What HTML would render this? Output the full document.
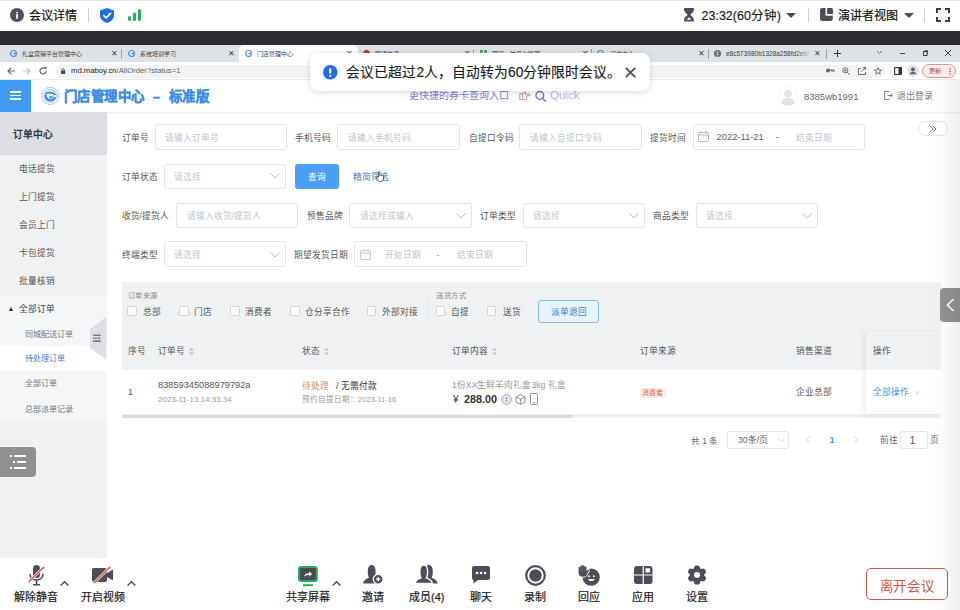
<!DOCTYPE html>
<html lang="zh-CN"><head><meta charset="utf-8">
<style>
*{margin:0;padding:0;box-sizing:border-box}
html,body{width:960px;height:610px;overflow:hidden;background:#fff;font-family:"Liberation Sans",sans-serif;color:#333}
.a{position:absolute}
.t{position:absolute;white-space:nowrap;line-height:1}
svg{position:absolute;overflow:visible}
#topbar{left:0;top:0;width:960px;height:31px;background:#fff;border-top:1px solid #e6e6e6}
#dark{left:0;top:31px;width:960px;height:14px;background:#2c2d31}
#tabs{left:0;top:45px;width:960px;height:17px;background:#dee1e6}
#addr{left:0;top:62px;width:960px;height:18px;background:#fff}
#hdr{left:0;top:80px;width:960px;height:32px;background:#fff}
#side{left:0;top:112px;width:107px;height:446px;background:#f0f1f3}
#main{left:107px;top:112px;width:853px;height:446px;background:#fff}
#bot{left:0;top:558px;width:960px;height:52px;background:#fff}
.tab{position:absolute;top:45px;height:17px}
.tabt{font-size:6px;color:#3c4043;top:51px}
.x{font-size:8px;color:#444;top:50px}
.inp{position:absolute;border:1px solid #e1e3e8;border-radius:3px;background:#fff}
.lbl{font-size:8.7px;color:#555}
.ph{font-size:8.7px;color:#c0c4cc}
.cb{position:absolute;width:9.6px;height:9.6px;border:1px solid #d3d6dc;background:#fff;border-radius:1px;top:306.4px;margin-left:-0.4px}
.cbt{font-size:8.7px;color:#555;top:308px}
.th{font-size:8.7px;color:#555;top:347px}
.lab{font-size:11px;color:#1a1a1a;top:592px;-webkit-text-stroke:0.2px #1a1a1a}
</style></head><body>
<div class="a" id="topbar"></div>
<div class="a" id="dark"></div>
<div class="a" id="tabs"></div>
<div class="a" id="addr"></div>
<div class="a" id="hdr"></div>
<div class="a" id="side"></div>
<div class="a" id="main"></div>
<div class="a" id="bot"></div>

<!-- ===== meeting top bar ===== -->
<svg style="left:10px;top:7.8px" width="14" height="14" viewBox="0 0 14 14"><circle cx="7" cy="7" r="7" fill="#4c515e"/><rect x="6.2" y="5.9" width="1.7" height="5" fill="#fff"/><rect x="6.2" y="3.9" width="1.7" height="1.3" fill="#fff"/></svg>
<div class="t" style="left:29px;top:10px;font-size:12px;color:#111;-webkit-text-stroke:0.2px #111">会议详情</div>
<div class="a" style="left:88px;top:8px;width:1px;height:14px;background:#d0d0d0"></div>
<svg style="left:100px;top:8px" width="14" height="15" viewBox="0 0 14 15"><path d="M7 0 L14 2.5 V7.5 C14 11 11 13.5 7 15 C3 13.5 0 11 0 7.5 V2.5 Z" fill="#1a6fe8"/><path d="M3.8 7.6 L6.2 9.8 L10.4 5.4" stroke="#fff" stroke-width="1.8" fill="none" stroke-linecap="round" stroke-linejoin="round"/></svg>
<svg style="left:128px;top:9px" width="14" height="12" viewBox="0 0 14 12"><rect x="0" y="7" width="3" height="5" rx="1.5" fill="#1fb45a"/><rect x="5" y="3.5" width="3" height="8.5" rx="1.5" fill="#1fb45a"/><rect x="10" y="0" width="3" height="12" rx="1.5" fill="#1fb45a"/></svg>

<svg style="left:684px;top:8.1px" width="10" height="13.5" viewBox="0 0 10 13.5"><path d="M1 0 H9 C9.6 0 10 .4 10 1 C10 4 7.2 5.4 6.4 6.75 C7.2 8.1 10 9.5 10 12.5 C10 13.1 9.6 13.5 9 13.5 H1 C.4 13.5 0 13.1 0 12.5 C0 9.5 2.8 8.1 3.6 6.75 C2.8 5.4 0 4 0 1 C0 .4 .4 0 1 0 Z" fill="#4b4e57"/><path d="M5 9.3 L7.4 11.8 H2.6 Z" fill="#fff"/></svg>
<div class="t" style="left:701.5px;top:9.8px;font-size:12.5px;color:#1a1a1a;-webkit-text-stroke:0.15px #1a1a1a">23:32(60分钟)</div>
<svg style="left:786px;top:13px" width="10" height="5" viewBox="0 0 10 5"><path d="M0 0 H10 L5 5 Z" fill="#4b4e57"/></svg>
<div class="a" style="left:808px;top:8px;width:1px;height:14px;background:#d0d0d0"></div>
<svg style="left:819.6px;top:8.3px" width="13" height="13.4" viewBox="0 0 13 13.4"><rect x="0" y="0" width="12.8" height="13.1" rx="2.4" fill="#4b4e57"/><path d="M6.4 0 V6.9 H12.8" stroke="#fff" stroke-width="1.8" fill="none"/><rect x="7.3" y="0" width="5.5" height="6" rx="1.5" fill="#4b4e57"/></svg>
<div class="t" style="left:838px;top:9.5px;font-size:12px;color:#111;-webkit-text-stroke:0.2px #111">演讲者视图</div>
<svg style="left:904px;top:13px" width="10" height="5" viewBox="0 0 10 5"><path d="M0 0 H10 L5 5 Z" fill="#4b4e57"/></svg>
<div class="a" style="left:924px;top:8px;width:1px;height:14px;background:#d0d0d0"></div>
<svg style="left:936px;top:8px" width="14" height="14" viewBox="0 0 14 14"><path d="M1 5 V1 H5 M9 1 H13 V5 M13 9 V13 H9 M5 13 H1 V9" stroke="#3b3e45" stroke-width="2" fill="none"/></svg>

<!-- ===== chrome tabs ===== -->
<svg style="left:10px;top:50px" width="7" height="7" viewBox="0 0 10 10"><circle cx="5" cy="5" r="4.2" fill="none" stroke="#3d8ae6" stroke-width="1.6"/><path d="M5 5 H8.5" stroke="#3d8ae6" stroke-width="1.6"/></svg>
<div class="t tabt" style="left:22px">礼盒营销平台管理中心</div>
<div class="t x" style="left:111px">✕</div>
<div class="a" style="left:121px;top:49px;width:1px;height:10px;background:#9aa0a6"></div>
<svg style="left:128px;top:50px" width="7" height="7" viewBox="0 0 10 10"><circle cx="5" cy="5" r="4.2" fill="none" stroke="#3d8ae6" stroke-width="1.6"/><path d="M5 5 H8.5" stroke="#3d8ae6" stroke-width="1.6"/></svg>
<div class="t tabt" style="left:140px">系统培训学习</div>
<div class="t x" style="left:228px">✕</div>
<div class="a" style="left:239px;top:45px;width:119px;height:17px;background:#fff;border-radius:5px 5px 0 0"></div>
<svg style="left:245px;top:50px" width="7" height="7" viewBox="0 0 10 10"><circle cx="5" cy="5" r="4.2" fill="none" stroke="#3d8ae6" stroke-width="1.6"/><path d="M5 5 H8.5" stroke="#3d8ae6" stroke-width="1.6"/></svg>
<div class="t tabt" style="left:257px">门店管理中心</div>
<div class="t x" style="left:346px">✕</div>
<svg style="left:363px;top:50px" width="7" height="7" viewBox="0 0 10 10"><circle cx="5" cy="5" r="5" fill="#d93025"/></svg>
<div class="t tabt" style="left:375px">圆通快递</div>
<div class="t x" style="left:464px">✕</div>
<div class="a" style="left:473px;top:49px;width:1px;height:10px;background:#9aa0a6"></div>
<svg style="left:480px;top:50px" width="7" height="7" viewBox="0 0 10 10"><rect x="0" y="0" width="4" height="4" fill="#34a853"/><rect x="6" y="0" width="4" height="4" fill="#34a853"/><rect x="0" y="6" width="4" height="4" fill="#34a853"/><rect x="6" y="6" width="4" height="4" fill="#34a853"/></svg>
<div class="t tabt" style="left:491.5px">营销一体平台管理</div>
<div class="t x" style="left:582px">✕</div>
<div class="a" style="left:591px;top:49px;width:1px;height:10px;background:#9aa0a6"></div>
<svg style="left:597px;top:50px" width="7" height="7" viewBox="0 0 10 10"><circle cx="5" cy="5" r="4.2" fill="none" stroke="#3d8ae6" stroke-width="1.6"/></svg>
<div class="t tabt" style="left:610px">订单中心</div>
<div class="t x" style="left:698px">✕</div>
<div class="a" style="left:708px;top:49px;width:1px;height:10px;background:#9aa0a6"></div>
<svg style="left:714px;top:50px" width="7" height="7" viewBox="0 0 10 10"><circle cx="5" cy="5" r="5" fill="#5f6368"/><path d="M2 3 Q5 5 8 3 M2 7 Q5 5 8 7 M5 0 V10" stroke="#dee1e6" stroke-width="0.8" fill="none"/></svg>
<div class="t tabt" style="left:726px;font-size:6.5px;top:50.5px">e8c573980b1328a258fd2e6f</div>
<div class="a" style="left:796px;top:45px;width:16px;height:17px;background:linear-gradient(90deg,rgba(222,225,230,0),#dee1e6)"></div>
<div class="t x" style="left:814px">✕</div>
<div class="a" style="left:826px;top:49px;width:1px;height:10px;background:#9aa0a6"></div>
<svg style="left:833.5px;top:50px" width="7" height="7" viewBox="0 0 7 7"><path d="M3.5 0 V7 M0 3.5 H7" stroke="#333" stroke-width="1"/></svg>
<svg style="left:877px;top:51px" width="5" height="3" viewBox="0 0 10 6"><path d="M0 0 L5 5 L10 0" stroke="#444" stroke-width="1.5" fill="none"/></svg>
<div class="a" style="left:900px;top:53px;width:5px;height:1px;background:#444"></div>
<svg style="left:923px;top:50px" width="5" height="6" viewBox="0 0 5 6"><rect x="0.5" y="1.5" width="3.5" height="4" stroke="#444" fill="none" stroke-width="1"/><path d="M1.5 0.5 H4.5 V4" stroke="#444" fill="none" stroke-width="0.8"/></svg>
<svg style="left:945px;top:50px" width="6" height="6" viewBox="0 0 6 6"><path d="M0 0 L6 6 M6 0 L0 6" stroke="#444" stroke-width="1"/></svg>

<!-- ===== address bar ===== -->
<svg style="left:7px;top:67px" width="8" height="8" viewBox="0 0 8 8"><path d="M8 4 H1 M4 1 L1 4 L4 7" stroke="#5f6368" stroke-width="1.2" fill="none"/></svg>
<svg style="left:23px;top:67px" width="8" height="8" viewBox="0 0 8 8"><path d="M0 4 H7 M4 1 L7 4 L4 7" stroke="#bdc1c6" stroke-width="1.2" fill="none"/></svg>
<svg style="left:39px;top:67px" width="8" height="8" viewBox="0 0 8 8"><path d="M7 4 A3 3 0 1 1 5.8 1.6" stroke="#5f6368" stroke-width="1.2" fill="none"/><path d="M4.5 0 H7.5 V3 Z" fill="#5f6368"/></svg>
<div class="a" style="left:55px;top:64.5px;width:830px;height:13.5px;background:#f1f3f4;border-radius:7px"></div>
<svg style="left:61px;top:68px" width="4.2" height="6" viewBox="0 0 5 7"><rect x="0" y="3" width="5" height="4" rx="0.6" fill="#4a4d52"/><path d="M1.1 3.2 V2.1 A1.4 1.4 0 0 1 3.9 2.1 V3.2" stroke="#4a4d52" stroke-width="1" fill="none"/></svg>
<div class="t" style="left:71px;top:66.8px;font-size:7.7px;color:#202124">md.maboy.cn<span style="color:#5f6368">/AllOrder?status=1</span></div>
<svg style="left:826px;top:68px" width="8" height="5" viewBox="0 0 8 5"><circle cx="2" cy="2.5" r="2" fill="#5f6368"/><path d="M3 2 H8 V4 M6 2 V4" stroke="#5f6368" stroke-width="1" fill="none"/></svg>
<svg style="left:842px;top:67px" width="8" height="8" viewBox="0 0 8 8"><circle cx="3.3" cy="3.3" r="2.6" stroke="#5f6368" stroke-width="0.9" fill="none"/><path d="M5.2 5.2 L7.8 7.8 M2 3.3 H4.6 M3.3 2 V4.6" stroke="#5f6368" stroke-width="0.9"/></svg>
<svg style="left:858px;top:67px" width="8" height="8" viewBox="0 0 8 8"><path d="M3 1.5 H0.5 V7.5 H7.5 V5 M3.5 4.5 L7.5 0.5 M5 0.5 H7.5 V3" stroke="#5f6368" stroke-width="0.9" fill="none"/></svg>
<svg style="left:874px;top:67px" width="8" height="8" viewBox="0 0 10 10"><path d="M5 0.8 L6.2 3.7 L9.3 3.9 L6.9 5.9 L7.7 9 L5 7.3 L2.3 9 L3.1 5.9 L0.7 3.9 L3.8 3.7 Z" stroke="#5f6368" stroke-width="1.1" fill="none" stroke-linejoin="round"/></svg>
<svg style="left:894px;top:67px" width="8" height="8" viewBox="0 0 8 8"><rect x="0.6" y="0.6" width="6.8" height="6.8" stroke="#333" stroke-width="1.1" fill="none"/><rect x="4.5" y="0.6" width="3" height="6.8" fill="#333"/></svg>
<svg style="left:907px;top:65px" width="12" height="12" viewBox="0 0 12 12"><circle cx="6" cy="6" r="6" fill="#dfe3ea"/><circle cx="6" cy="4.6" r="2" fill="#5f6368"/><path d="M2.6 9.3 C3 7.5 4.5 7 6 7 C7.5 7 9 7.5 9.4 9.3 Z" fill="#5f6368"/></svg>
<div class="a" style="left:922px;top:64px;width:34px;height:14px;border:0.8px solid #d59592;border-radius:7px;background:#fbeceb"></div>
<div class="t" style="left:929px;top:67.8px;font-size:6.2px;color:#b3403c">更新</div>
<svg style="left:948.5px;top:67.5px" width="2" height="7" viewBox="0 0 2 7"><circle cx="1" cy="1" r="0.75" fill="#8b3a3a"/><circle cx="1" cy="3.5" r="0.75" fill="#8b3a3a"/><circle cx="1" cy="6" r="0.75" fill="#8b3a3a"/></svg>
<div class="a" style="left:0;top:79px;width:960px;height:1px;background:#e8eaed"></div>

<!-- ===== app header ===== -->
<div class="a" style="left:0;top:80px;width:31px;height:32px;background:#3f9af3"></div>
<div class="a" style="left:10px;top:91.2px;width:11px;height:1.6px;background:#fff"></div>
<div class="a" style="left:10px;top:94.7px;width:11px;height:1.6px;background:#fff"></div>
<div class="a" style="left:10px;top:98.2px;width:11px;height:1.6px;background:#fff"></div>
<svg style="left:41px;top:87px" width="19" height="18" viewBox="0 0 19 18"><circle cx="9.2" cy="8.9" r="8.5" fill="none" stroke="#4a93e0" stroke-width="1" stroke-dasharray="0.9 0.7"/><circle cx="9.2" cy="8.9" r="6.4" fill="none" stroke="#4a93e0" stroke-width="0.6"/><path d="M4.8 7.2 C6.5 4.9 11 4.8 14.4 8" stroke="#3d8ae0" stroke-width="2" fill="none"/><path d="M4.7 7.6 C4.3 11 6.5 13.4 9.3 13.4 C11.6 13.4 13.3 12 13.9 10.2" stroke="#3d8ae0" stroke-width="2.3" fill="none"/><path d="M7.6 9.2 H12.6 L9.6 12.2 Z" fill="#3d8ae0"/></svg>
<div class="t" style="left:64px;top:89.5px;font-size:13.4px;letter-spacing:0.4px;font-weight:bold;color:#3a8ee0;-webkit-text-stroke:0.3px #3a8ee0">门店管理中心 &nbsp;–&nbsp; 标准版</div>

<div class="t" style="left:409px;top:90.5px;font-size:10px;color:#8479d6">更快捷的券卡查询入口</div>
<svg style="left:518.5px;top:90.5px" width="12" height="10" viewBox="0 0 12 10"><path d="M0.8 2.6 H3.6 V8.6 H0.8 Z M3.6 3.2 L5.6 1 H6.6 L6.1 3 H10.6 C11.5 3 11.5 4.6 10.6 4.6 H7.8 V7.8 C7.8 8.3 7.4 8.6 7 8.6 H3.6" stroke="#d58a86" stroke-width="1" fill="none" stroke-linejoin="round"/></svg>
<svg style="left:535px;top:90.5px" width="12" height="11" viewBox="0 0 12 11"><circle cx="4.8" cy="4.4" r="3.9" stroke="#7366cf" stroke-width="1.3" fill="none"/><path d="M7.4 7.3 L10.6 10.2" stroke="#7366cf" stroke-width="1.4" stroke-linecap="round"/></svg>
<div class="t" style="left:550px;top:90px;font-size:11.5px;color:#bdb5ea">Quick</div>

<svg style="left:778px;top:86px" width="20" height="20" viewBox="0 0 20 20"><circle cx="10" cy="10" r="9.6" fill="#fff" stroke="#eee" stroke-width="0.6"/><circle cx="10" cy="7.8" r="3.8" fill="#e3e3e3"/><path d="M3 17 C4 12.5 7 12 10 12 C13 12 16 12.5 17 17 C15 19 12.5 19.6 10 19.6 C7.5 19.6 5 19 3 17 Z" fill="#e3e3e3"/></svg>
<div class="t" style="left:804px;top:91.5px;font-size:9.5px;color:#666">8385wb1991</div>
<svg style="left:884px;top:91px" width="9" height="9" viewBox="0 0 9 9"><path d="M5.5 0.5 H0.5 V8.5 H5.5 M3.5 4.5 H8.5 M6.5 2.5 L8.5 4.5 L6.5 6.5" stroke="#777" stroke-width="0.9" fill="none"/></svg>
<div class="t" style="left:896.5px;top:91.5px;font-size:8.9px;color:#777">退出登录</div>

<!-- ===== sidebar ===== -->
<div class="a" style="left:0;top:112px;width:107px;height:43.4px;background:#dcdee4"></div>
<div class="t" style="left:12.5px;top:129.5px;font-size:9.8px;font-weight:bold;color:#333">订单中心</div>
<div class="t" style="left:18.7px;top:165px;font-size:8.7px;color:#555">电话提货</div>
<div class="t" style="left:18.7px;top:193px;font-size:8.7px;color:#555">上门提货</div>
<div class="t" style="left:18.7px;top:221px;font-size:8.7px;color:#555">会员上门</div>
<div class="t" style="left:18.7px;top:249px;font-size:8.7px;color:#555">卡包提货</div>
<div class="t" style="left:18.7px;top:277px;font-size:8.7px;color:#555">批量核销</div>
<div class="a" style="left:0;top:296px;width:107px;height:125px;background:#f5f6f8"></div>
<svg style="left:8.5px;top:307px" width="4" height="4" viewBox="0 0 4 4"><path d="M0 4 L2 0 L4 4 Z" fill="#333"/></svg>
<div class="t" style="left:18.7px;top:305px;font-size:8.7px;color:#444">全部订单</div>
<div class="t" style="left:25px;top:330.5px;font-size:8.1px;color:#777">同城配送订单</div>
<div class="a" style="left:0;top:346px;width:107px;height:25px;background:#fff"></div>
<div class="t" style="left:25px;top:355.3px;font-size:8.1px;color:#3d7fc6">待处理订单</div>
<div class="t" style="left:25px;top:380.3px;font-size:8.1px;color:#777">全部订单</div>
<div class="t" style="left:25px;top:405.8px;font-size:8.1px;color:#777">总部派单记录</div>
<svg style="left:89px;top:317px" width="18" height="43" viewBox="0 0 18 43"><path d="M17.4 0 V43 L1 31 V12 Z" fill="#dcdee3"/><path d="M4 18.3 H11.8 M4 24.1 H11.8" stroke="#555" stroke-width="1.1"/><path d="M4 21.2 H8.6" stroke="#666" stroke-width="1"/><path d="M9.6 19.8 L11.6 21.2 L9.6 22.6 Z" fill="#555"/></svg>
<div class="a" style="left:0;top:447px;width:36px;height:30px;background:#8f9092;border-radius:0 4px 4px 0"></div>
<svg style="left:10px;top:455px" width="17" height="15" viewBox="0 0 17 15"><rect x="0" y="0" width="2" height="2" fill="#fff"/><rect x="4" y="0" width="12.2" height="2" rx="0.8" fill="#fff"/><rect x="3" y="6" width="2" height="2" fill="#fff"/><rect x="7" y="6" width="9.2" height="2" rx="0.8" fill="#fff"/><rect x="0" y="12" width="2" height="2" fill="#fff"/><rect x="4" y="12" width="12.2" height="2" rx="0.8" fill="#fff"/></svg>

<!-- ===== filter form ===== -->
<div class="a" style="left:107px;top:112px;width:853px;height:2px;background:linear-gradient(#ececec,#fff)"></div>
<div class="t lbl" style="left:121.5px;top:133.5px">订单号</div>
<div class="inp" style="left:155px;top:124px;width:132px;height:26px"></div>
<div class="t ph" style="left:165px;top:133.5px">请输入订单号</div>
<div class="t lbl" style="left:295px;top:133.5px">手机号码</div>
<div class="inp" style="left:337px;top:124px;width:123px;height:26px"></div>
<div class="t ph" style="left:347.5px;top:133.5px">请输入手机号码</div>
<div class="t lbl" style="left:468.5px;top:133.5px">自提口令码</div>
<div class="inp" style="left:519px;top:124px;width:123px;height:26px"></div>
<div class="t ph" style="left:529.5px;top:133.5px">请输入自提口令码</div>
<div class="t lbl" style="left:650px;top:133.5px">提货时间</div>
<div class="inp" style="left:693px;top:124px;width:172px;height:26px"></div>
<svg style="left:698px;top:131px" width="11" height="11" viewBox="0 0 11 11"><rect x="0.5" y="1.5" width="10" height="9" rx="1" stroke="#aaa" stroke-width="0.8" fill="none"/><path d="M0.5 4 H10.5 M3 0 V2.5 M8 0 V2.5" stroke="#aaa" stroke-width="0.8"/><path d="M2.5 6 H3.5 M5 6 H6 M7.5 6 H8.5 M2.5 8 H3.5 M5 8 H6 M7.5 8 H8.5" stroke="#bbb" stroke-width="0.7"/></svg>
<div class="t" style="left:716.5px;top:132px;font-size:9.4px;color:#606266">2022-11-21</div>
<div class="t" style="left:775.5px;top:132px;font-size:9.4px;color:#606266">-</div>
<div class="t ph" style="left:796px;top:133.5px">结束日期</div>
<div class="a" style="left:918px;top:121px;width:29.5px;height:15px;border:1px solid #e2e4e8;border-radius:7px;background:#fff"></div>
<svg style="left:929px;top:124.5px" width="8" height="8" viewBox="0 0 8 8"><path d="M0.6 0.5 L4 4 L0.6 7.5 M3.6 0.5 L7 4 L3.6 7.5" stroke="#666" stroke-width="0.9" fill="none"/></svg>

<div class="t lbl" style="left:121.5px;top:172.5px">订单状态</div>
<div class="inp" style="left:164px;top:164px;width:121.5px;height:25px"></div>
<div class="t ph" style="left:174px;top:172.5px">请选择</div>
<svg style="left:269.5px;top:173px" width="10" height="5.5" viewBox="0 0 10 5.5"><path d="M0.4 0.4 L5 5 L9.6 0.4" stroke="#b4b8c0" stroke-width="0.9" fill="none"/></svg>
<div class="a" style="left:294.5px;top:164px;width:44px;height:24.5px;background:#4a9ff5;border-radius:3px"></div>
<div class="t" style="left:307.5px;top:172.5px;font-size:8.7px;color:#fff">查询</div>
<div class="t" style="left:353px;top:172.5px;font-size:8.7px;color:#3d7fc8">精简筛选</div>
<svg style="left:375.6px;top:171.2px" width="9" height="11" viewBox="0 0 9 11"><path d="M2.5 6 V1.2 C2.5 0.4 3.8 0.4 3.8 1.2 V4.5 C3.8 3.8 5 3.8 5 4.5 C5 3.9 6.2 3.9 6.2 4.6 C6.2 4.1 7.4 4.1 7.4 4.8 V8 C7.4 9.5 6.5 10.5 5 10.5 H4 C3 10.5 2.3 9.8 1.5 8.8 L0.4 7 C0 6.3 0.9 5.6 1.6 6.3 Z" fill="#fff" stroke="#222" stroke-width="0.7"/></svg>

<div class="t lbl" style="left:121.5px;top:212px">收货/提货人</div>
<div class="inp" style="left:176px;top:203px;width:121.5px;height:25px"></div>
<div class="t ph" style="left:186.5px;top:212px">请输入收货/提货人</div>
<div class="t lbl" style="left:307px;top:212px">预售品牌</div>
<div class="inp" style="left:349px;top:203px;width:122.5px;height:25px"></div>
<div class="t ph" style="left:359.5px;top:212px">请选择或输入</div>
<svg style="left:455.5px;top:213px" width="10" height="5.5" viewBox="0 0 10 5.5"><path d="M0.4 0.4 L5 5 L9.6 0.4" stroke="#b4b8c0" stroke-width="0.9" fill="none"/></svg>
<div class="t lbl" style="left:480px;top:212px">订单类型</div>
<div class="inp" style="left:522.5px;top:203px;width:122px;height:25px"></div>
<div class="t ph" style="left:532.5px;top:212px">请选择</div>
<svg style="left:628.5px;top:213px" width="10" height="5.5" viewBox="0 0 10 5.5"><path d="M0.4 0.4 L5 5 L9.6 0.4" stroke="#b4b8c0" stroke-width="0.9" fill="none"/></svg>
<div class="t lbl" style="left:653px;top:212px">商品类型</div>
<div class="inp" style="left:696px;top:203px;width:122px;height:25px"></div>
<div class="t ph" style="left:706px;top:212px">请选择</div>
<svg style="left:802px;top:213px" width="10" height="5.5" viewBox="0 0 10 5.5"><path d="M0.4 0.4 L5 5 L9.6 0.4" stroke="#b4b8c0" stroke-width="0.9" fill="none"/></svg>

<div class="t lbl" style="left:121.5px;top:251px">终端类型</div>
<div class="inp" style="left:164px;top:241px;width:121.5px;height:26px"></div>
<div class="t ph" style="left:174px;top:251px">请选择</div>
<svg style="left:269.5px;top:252px" width="10" height="5.5" viewBox="0 0 10 5.5"><path d="M0.4 0.4 L5 5 L9.6 0.4" stroke="#b4b8c0" stroke-width="0.9" fill="none"/></svg>
<div class="t lbl" style="left:294px;top:251px">期望发货日期</div>
<div class="inp" style="left:354px;top:241px;width:172.5px;height:26px"></div>
<svg style="left:360px;top:249px" width="11" height="11" viewBox="0 0 11 11"><rect x="0.5" y="1.5" width="10" height="9" rx="1" stroke="#bbb" stroke-width="0.8" fill="none"/><path d="M0.5 4 H10.5 M3 0 V2.5 M8 0 V2.5" stroke="#bbb" stroke-width="0.8"/><path d="M2.5 6 H3.5 M5 6 H6 M7.5 6 H8.5 M2.5 8 H3.5 M5 8 H6 M7.5 8 H8.5" stroke="#ccc" stroke-width="0.7"/></svg>
<div class="t ph" style="left:384.5px;top:251px">开始日期</div>
<div class="t" style="left:436.5px;top:250px;font-size:9.4px;color:#999">-</div>
<div class="t ph" style="left:457px;top:251px">结束日期</div>

<!-- ===== table ===== -->
<div class="a" style="left:121.5px;top:281.5px;width:819.5px;height:88px;background:#f0f1f3"></div>
<div class="t" style="left:127.7px;top:292.3px;font-size:7.3px;letter-spacing:0.6px;color:#8a8a8a">订单来源</div>
<div class="cb" style="left:127.7px"></div><div class="t cbt" style="left:142.6px">总部</div>
<div class="cb" style="left:179.4px"></div><div class="t cbt" style="left:193.6px">门店</div>
<div class="cb" style="left:230.4px"></div><div class="t cbt" style="left:244.6px">消费者</div>
<div class="cb" style="left:290.6px"></div><div class="t cbt" style="left:304.8px">仓分享合作</div>
<div class="cb" style="left:367px"></div><div class="t cbt" style="left:382px">外部对接</div>
<div class="a" style="left:427.5px;top:300px;width:1px;height:22px;background:#e2e4e8"></div>
<div class="t" style="left:436px;top:292.3px;font-size:7.3px;letter-spacing:0.6px;color:#8a8a8a">送货方式</div>
<div class="cb" style="left:436px"></div><div class="t cbt" style="left:451px">自提</div>
<div class="cb" style="left:487px"></div><div class="t cbt" style="left:502.7px">送货</div>
<div class="a" style="left:538px;top:300.2px;width:61px;height:22.5px;border:1px solid #86bbe9;border-radius:3px;background:#e9f3fc"></div>
<div class="t" style="left:551px;top:308px;font-size:8.7px;color:#3a7fc9">派单退回</div>

<div class="t th" style="left:128.2px">序号</div>
<div class="t th" style="left:158px">订单号</div>
<svg style="left:189px;top:347px" width="5" height="9" viewBox="0 0 5 9"><path d="M0 3.5 L2.5 0.5 L5 3.5 Z M0 5.5 L2.5 8.5 L5 5.5 Z" fill="#c0c4cc"/></svg>
<div class="t th" style="left:302px">状态</div>
<svg style="left:324px;top:347px" width="5" height="9" viewBox="0 0 5 9"><path d="M0 3.5 L2.5 0.5 L5 3.5 Z M0 5.5 L2.5 8.5 L5 5.5 Z" fill="#c0c4cc"/></svg>
<div class="t th" style="left:452px">订单内容</div>
<svg style="left:492px;top:347px" width="5" height="9" viewBox="0 0 5 9"><path d="M0 3.5 L2.5 0.5 L5 3.5 Z M0 5.5 L2.5 8.5 L5 5.5 Z" fill="#c0c4cc"/></svg>
<div class="t th" style="left:639.7px">订单来源</div>
<div class="t th" style="left:796px">销售渠道</div>

<div class="a" style="left:121.5px;top:369.5px;width:819.5px;height:45px;background:#fff;border-bottom:1px solid #ebeef5"></div>
<div class="t" style="left:128px;top:388px;font-size:9px;color:#555">1</div>
<div class="t" style="left:158px;top:380.7px;font-size:9.24px;color:#555">83859345088979792a</div>
<div class="t" style="left:158px;top:395.5px;font-size:8px;color:#999">2023-11-13 14:33:34</div>
<div class="t" style="left:302px;top:381.5px;font-size:8.7px;color:#e38a4c">待处理</div>
<div class="t" style="left:336px;top:381.5px;font-size:8.7px;color:#333">/ 无需付款</div>
<div class="t" style="left:302px;top:395.5px;font-size:7.6px;color:#999">预约自提日期：2023-11-16</div>
<div class="t" style="left:452px;top:380.5px;font-size:8.7px;color:#999">1份XX生鲜羊肉礼盒3kg 礼盒</div>
<div class="t" style="left:453px;top:394.5px;font-size:10px;color:#333">¥</div>
<div class="t" style="left:464px;top:393.5px;font-size:10.8px;color:#333;font-weight:bold">288.00</div>
<svg style="left:501px;top:393.5px" width="11" height="11" viewBox="0 0 11 11"><circle cx="5.5" cy="5.5" r="4.8" stroke="#888" stroke-width="0.8" fill="none"/><circle cx="5.5" cy="5.5" r="3.2" stroke="#aaa" stroke-width="0.5" fill="none"/><path d="M3.8 4.5 H7.2 M3.8 6.5 H7.2 M5.5 3 V8" stroke="#888" stroke-width="0.6"/></svg>
<svg style="left:514.5px;top:393.5px" width="11" height="11" viewBox="0 0 11 11"><path d="M5.5 0.7 L10 3 V8 L5.5 10.3 L1 8 V3 Z M1 3 L5.5 5.3 L10 3 M5.5 5.3 V10.3" stroke="#777" stroke-width="0.8" fill="none"/></svg>
<svg style="left:530px;top:393px" width="8" height="12" viewBox="0 0 8 12"><rect x="0.5" y="0.5" width="7" height="11" rx="1" stroke="#777" stroke-width="0.8" fill="none"/><path d="M3 9.5 H5" stroke="#777" stroke-width="0.8"/></svg>
<div class="a" style="left:639.7px;top:388px;width:26px;height:10px;background:#fdecec;border-radius:2px"></div>
<div class="t" style="left:642px;top:389px;font-size:7px;color:#d8625f">消费者</div>
<div class="t" style="left:796px;top:388px;font-size:8.7px;color:#555">企业总部</div>
<div class="a" style="left:121.5px;top:414.5px;width:819.5px;height:3px;background:#eef0f3"></div>
<div class="a" style="left:121.5px;top:414.5px;width:451px;height:3px;background:#d6d8dc;border-radius:1px"></div>

<!-- fixed right column -->
<div class="a" style="left:866px;top:332px;width:75px;height:82px;background:transparent;box-shadow:-3px 0 5px rgba(0,0,0,0.06)"></div>
<div class="a" style="left:866px;top:332px;width:75px;height:37.5px;background:#f0f1f3"></div>
<div class="a" style="left:866px;top:369.5px;width:75px;height:44.5px;background:#fff"></div>
<div class="t th" style="left:872.8px">操作</div>
<div class="t" style="left:872.8px;top:388px;font-size:8.7px;color:#4a90d9">全部操作</div>
<svg style="left:915px;top:391px" width="5" height="3" viewBox="0 0 10 6"><path d="M0.5 0.5 L5 5 L9.5 0.5" stroke="#8ab4e0" stroke-width="1.2" fill="none"/></svg>

<!-- pagination -->
<div class="t" style="left:691px;top:436.5px;font-size:8.5px;color:#606266">共 1 条</div>
<div class="inp" style="left:726.5px;top:431px;width:62.5px;height:18px"></div>
<div class="t" style="left:738px;top:436px;font-size:8.7px;color:#606266">30条/页</div>
<svg style="left:778px;top:438px" width="7" height="4" viewBox="0 0 9 5"><path d="M0.3 0.3 L4.5 4.5 L8.7 0.3" stroke="#c0c4cc" stroke-width="0.9" fill="none"/></svg>
<svg style="left:806px;top:436px" width="4" height="7" viewBox="0 0 4 7"><path d="M3.6 0.3 L0.5 3.5 L3.6 6.7" stroke="#c0c4cc" stroke-width="0.8" fill="none"/></svg>
<div class="t" style="left:829.5px;top:436px;font-size:9px;color:#4a90d9;font-weight:bold">1</div>
<svg style="left:854px;top:436px" width="4" height="7" viewBox="0 0 4 7"><path d="M0.4 0.3 L3.5 3.5 L0.4 6.7" stroke="#c0c4cc" stroke-width="0.8" fill="none"/></svg>
<div class="t" style="left:880px;top:436px;font-size:8.7px;color:#606266">前往</div>
<div class="inp" style="left:899.5px;top:431px;width:28px;height:18px"></div>
<div class="t" style="left:909.5px;top:434.5px;font-size:11px;color:#606266">1</div>
<div class="t" style="left:930.4px;top:436px;font-size:8.7px;color:#606266">页</div>

<!-- right collapse tab -->
<div class="a" style="left:940.3px;top:288px;width:20px;height:34px;background:#929292;border-radius:4px 0 0 4px"></div>
<svg style="left:945.5px;top:298px" width="9" height="14" viewBox="0 0 9 14"><path d="M7.5 1 L1.5 7 L7.5 13" stroke="#fff" stroke-width="1.7" fill="none"/></svg>

<!-- ===== notification ===== -->
<div class="a" style="left:309.5px;top:53px;width:340px;height:38px;background:#fff;border-radius:8px;box-shadow:0 1px 6px rgba(0,0,0,0.16)"></div>
<svg style="left:322.5px;top:64.5px" width="14.5" height="14.5" viewBox="0 0 14 14"><circle cx="7" cy="7" r="7" fill="#1c6fe6"/><rect x="6" y="3" width="2" height="5.5" rx="1" fill="#fff"/><circle cx="7" cy="10.5" r="1.1" fill="#fff"/></svg>
<div class="t" style="left:346.4px;top:66.2px;font-size:13.8px;color:#1a1a1a;-webkit-text-stroke:0.15px #1a1a1a">会议已超过2人，自动转为60分钟限时会议。</div>
<svg style="left:624.5px;top:67px" width="11" height="11" viewBox="0 0 11 11"><path d="M0.8 0.8 L10.2 10.2 M10.2 0.8 L0.8 10.2" stroke="#555" stroke-width="1.9"/></svg>

<!-- ===== bottom toolbar ===== -->
<svg style="left:28px;top:565px" width="17" height="21" viewBox="0 0 17 21"><rect x="5" y="0" width="7" height="13" rx="3.5" fill="#4b4e57"/><path d="M2 9 C2 13 5 15 8.5 15 C12 15 15 13 15 9" stroke="#4b4e57" stroke-width="1.6" fill="none"/><path d="M8.5 15 V19.5 M5 19.8 H12" stroke="#4b4e57" stroke-width="1.6"/><path d="M0.5 17 L16 2" stroke="#fff" stroke-width="2.6"/><path d="M0.5 17 L16 2" stroke="#e8473f" stroke-width="1.4"/></svg>
<svg style="left:60px;top:581px" width="9" height="5" viewBox="0 0 9 5"><path d="M0.6 4.5 L4.5 0.8 L8.4 4.5" stroke="#4b4e57" stroke-width="1.4" fill="none"/></svg>
<div class="t lab" style="left:14px">解除静音</div>
<svg style="left:92px;top:567px" width="22" height="16" viewBox="0 0 22 16"><rect x="0" y="1" width="15" height="14" rx="2" fill="#4b4e57"/><path d="M15 6 L21 2.5 V13.5 L15 10 Z" fill="#4b4e57"/><path d="M2 16 L18 0" stroke="#fff" stroke-width="2.6"/><path d="M2 16 L18 0" stroke="#e8473f" stroke-width="1.4"/></svg>
<svg style="left:127px;top:581px" width="9" height="5" viewBox="0 0 9 5"><path d="M0.6 4.5 L4.5 0.8 L8.4 4.5" stroke="#4b4e57" stroke-width="1.4" fill="none"/></svg>
<div class="t lab" style="left:81px">开启视频</div>

<svg style="left:298px;top:566px" width="20" height="21" viewBox="0 0 20 21"><rect x="1" y="1" width="17.8" height="14" rx="2.2" fill="#4a494f" stroke="#1fae58" stroke-width="2"/><path d="M5.8 10.8 C6.5 8.3 8.5 7.2 11 7.2 V5.6 L14.3 8.1 L11 10.6 V9 C9 9 7.4 9.4 5.8 10.8 Z" fill="#fff"/><rect x="5" y="18.2" width="9.8" height="2" fill="#1fae58"/></svg>
<svg style="left:332px;top:581px" width="9" height="5" viewBox="0 0 9 5"><path d="M0.6 4.5 L4.5 0.8 L8.4 4.5" stroke="#4b4e57" stroke-width="1.4" fill="none"/></svg>
<div class="t lab" style="left:286px">共享屏幕</div>
<svg style="left:362px;top:564px" width="22" height="21" viewBox="0 0 22 21"><path d="M1 19.5 C1.5 16.5 3.5 15 7 13.8 C6 12.5 5.8 10 5.8 7 C5.8 3.5 7.5 1 9.7 1 C11.9 1 13.6 3.5 13.6 7 C13.6 10 13.4 12.5 12.4 13.8 C15.9 15 17.9 16.5 18.4 19.5 Z" fill="#4b4e57"/><circle cx="16.2" cy="15.2" r="4.9" fill="#4b4e57" stroke="#fff" stroke-width="1.3"/><path d="M14 15.2 H18.4 M16.2 13 V17.4" stroke="#fff" stroke-width="1.3"/></svg>
<div class="t lab" style="left:362px">邀请</div>
<svg style="left:414px;top:564px" width="25" height="21" viewBox="0 0 25 21"><path transform="translate(5.2 0)" d="M1 19.5 C1.5 16.5 3.5 15 7 13.8 C6 12.5 5.8 10 5.8 7 C5.8 3.5 7.5 1 9.7 1 C11.9 1 13.6 3.5 13.6 7 C13.6 10 13.4 12.5 12.4 13.8 C15.9 15 17.9 16.5 18.4 19.5 Z" fill="#4b4e57"/><path d="M1 19.5 C1.5 16.5 3.5 15 7 13.8 C6 12.5 5.8 10 5.8 7 C5.8 3.5 7.5 1 9.7 1 C11.9 1 13.6 3.5 13.6 7 C13.6 10 13.4 12.5 12.4 13.8 C15.9 15 17.9 16.5 18.4 19.5 Z" fill="#4b4e57" stroke="#fff" stroke-width="1.4"/></svg>
<div class="t lab" style="left:409px">成员(4)</div>
<svg style="left:472px;top:566px" width="18" height="18" viewBox="0 0 18 18"><path d="M2 0 H16 C17.1 0 18 .9 18 2 V12 C18 13.1 17.1 14 16 14 H6 L1.5 17.5 V14 C0.6 13.8 0 13 0 12 V2 C0 .9 .9 0 2 0 Z" fill="#4b4e57"/><circle cx="5" cy="7" r="1.3" fill="#fff"/><circle cx="9" cy="7" r="1.3" fill="#fff"/><circle cx="13" cy="7" r="1.3" fill="#fff"/></svg>
<div class="t lab" style="left:470px">聊天</div>
<svg style="left:524.5px;top:565px" width="21" height="21" viewBox="0 0 21 21"><circle cx="10.5" cy="10.5" r="9.3" stroke="#4b4e57" stroke-width="2.2" fill="none"/><circle cx="10.5" cy="10.5" r="6.2" fill="#4b4e57"/></svg>
<div class="t lab" style="left:524px">录制</div>
<svg style="left:578px;top:565px" width="23" height="21" viewBox="0 0 23 21"><circle cx="13.2" cy="12.2" r="8.6" fill="#4b4e57"/><g stroke="#fff" stroke-width="3.6"><path d="M1.5 8 V2.8 M3.5 8 V1.3 M5.5 8 V1.2 M7.5 8 V2.2 M8 8.5 L10 5.8" stroke-linecap="round" fill="none"/></g><ellipse cx="5" cy="8.6" rx="4.3" ry="3.4" fill="#4b4e57" stroke="#fff" stroke-width="1.3"/><g stroke="#4b4e57" stroke-width="1.9"><path d="M1.5 8 V2.8 M3.5 8 V1.3 M5.5 8 V1.2 M7.5 8 V2.2 M8 8.5 L10 5.8" stroke-linecap="round" fill="none"/></g><ellipse cx="5" cy="8.6" rx="4.1" ry="3.2" fill="#4b4e57"/><circle cx="11" cy="11.2" r="1" fill="#fff"/><circle cx="15.8" cy="11.2" r="1" fill="#fff"/><path d="M10 14 C11 16.8 15.8 16.8 16.8 14 Z" fill="#fff"/></svg>
<div class="t lab" style="left:578px">回应</div>
<svg style="left:634px;top:566px" width="19" height="18" viewBox="0 0 19 18"><rect x="0" y="0" width="18.5" height="18" rx="3" fill="#4b4e57"/><path d="M9.25 0 V18 M0 9 H18.5" stroke="#fff" stroke-width="1.2"/><rect x="11.5" y="2.2" width="4.6" height="4.4" fill="#fff" rx="0.5"/></svg>
<div class="t lab" style="left:632px">应用</div>
<svg style="left:687px;top:565px" width="20" height="20" viewBox="0 0 20 20"><circle cx="10" cy="10" r="7.4" fill="#4b4e57"/><g fill="#4b4e57"><rect x="7" y="0.4" width="6" height="19.2" rx="2.6"/><rect x="7" y="0.4" width="6" height="19.2" rx="2.6" transform="rotate(60 10 10)"/><rect x="7" y="0.4" width="6" height="19.2" rx="2.6" transform="rotate(120 10 10)"/></g><circle cx="10" cy="10" r="3" fill="#fff"/></svg>
<div class="t lab" style="left:686px">设置</div>
<div class="a" style="left:866px;top:568px;width:82px;height:31.5px;border:1.2px solid #d25550;border-radius:5px;background:#fff"></div>
<div class="t" style="left:879.5px;top:579.6px;font-size:13.4px;letter-spacing:0.8px;color:#d6534e">离开会议</div>

<!-- ===== right edge shadow ===== -->
<div class="a" style="left:928px;top:80px;width:32px;height:530px;background:linear-gradient(90deg,rgba(0,0,0,0) 0%,rgba(0,0,0,0.012) 45%,rgba(0,0,0,0.065) 100%)"></div>
</body></html>
